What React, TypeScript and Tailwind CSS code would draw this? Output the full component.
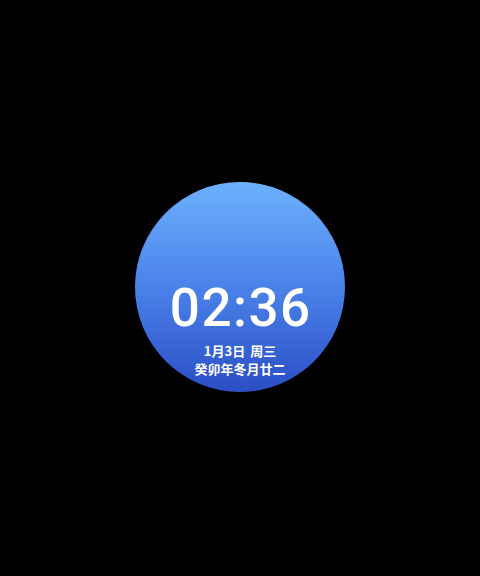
export default function App() {
  return (
    <div className="w-[480px] h-[576px] bg-black flex flex-col items-center pt-[182px]">
      <div className="w-[210px] h-[210px] rounded-full bg-gradient-to-b from-[#6cb0fd] via-[#4b82e9] to-[#2c4ec5] flex flex-col items-center pt-[100px] text-white">
        <div className="font-['Roboto','Noto_Sans',sans-serif] text-[53px] leading-[53px] font-medium tracking-[1.5px] pl-[1.5px]">
          02:36
        </div>
        <div className="mt-[7px] font-['Noto_Sans_CJK_SC',sans-serif] text-[13px] leading-[18px] font-bold flex items-center gap-[5px]">
          <span>1月3日</span>
          <span>周三</span>
        </div>
        <div className="font-['Noto_Sans_CJK_SC',sans-serif] text-[13px] leading-[18px] font-bold">
          癸卯年冬月廿二
        </div>
      </div>
    </div>
  );
}
